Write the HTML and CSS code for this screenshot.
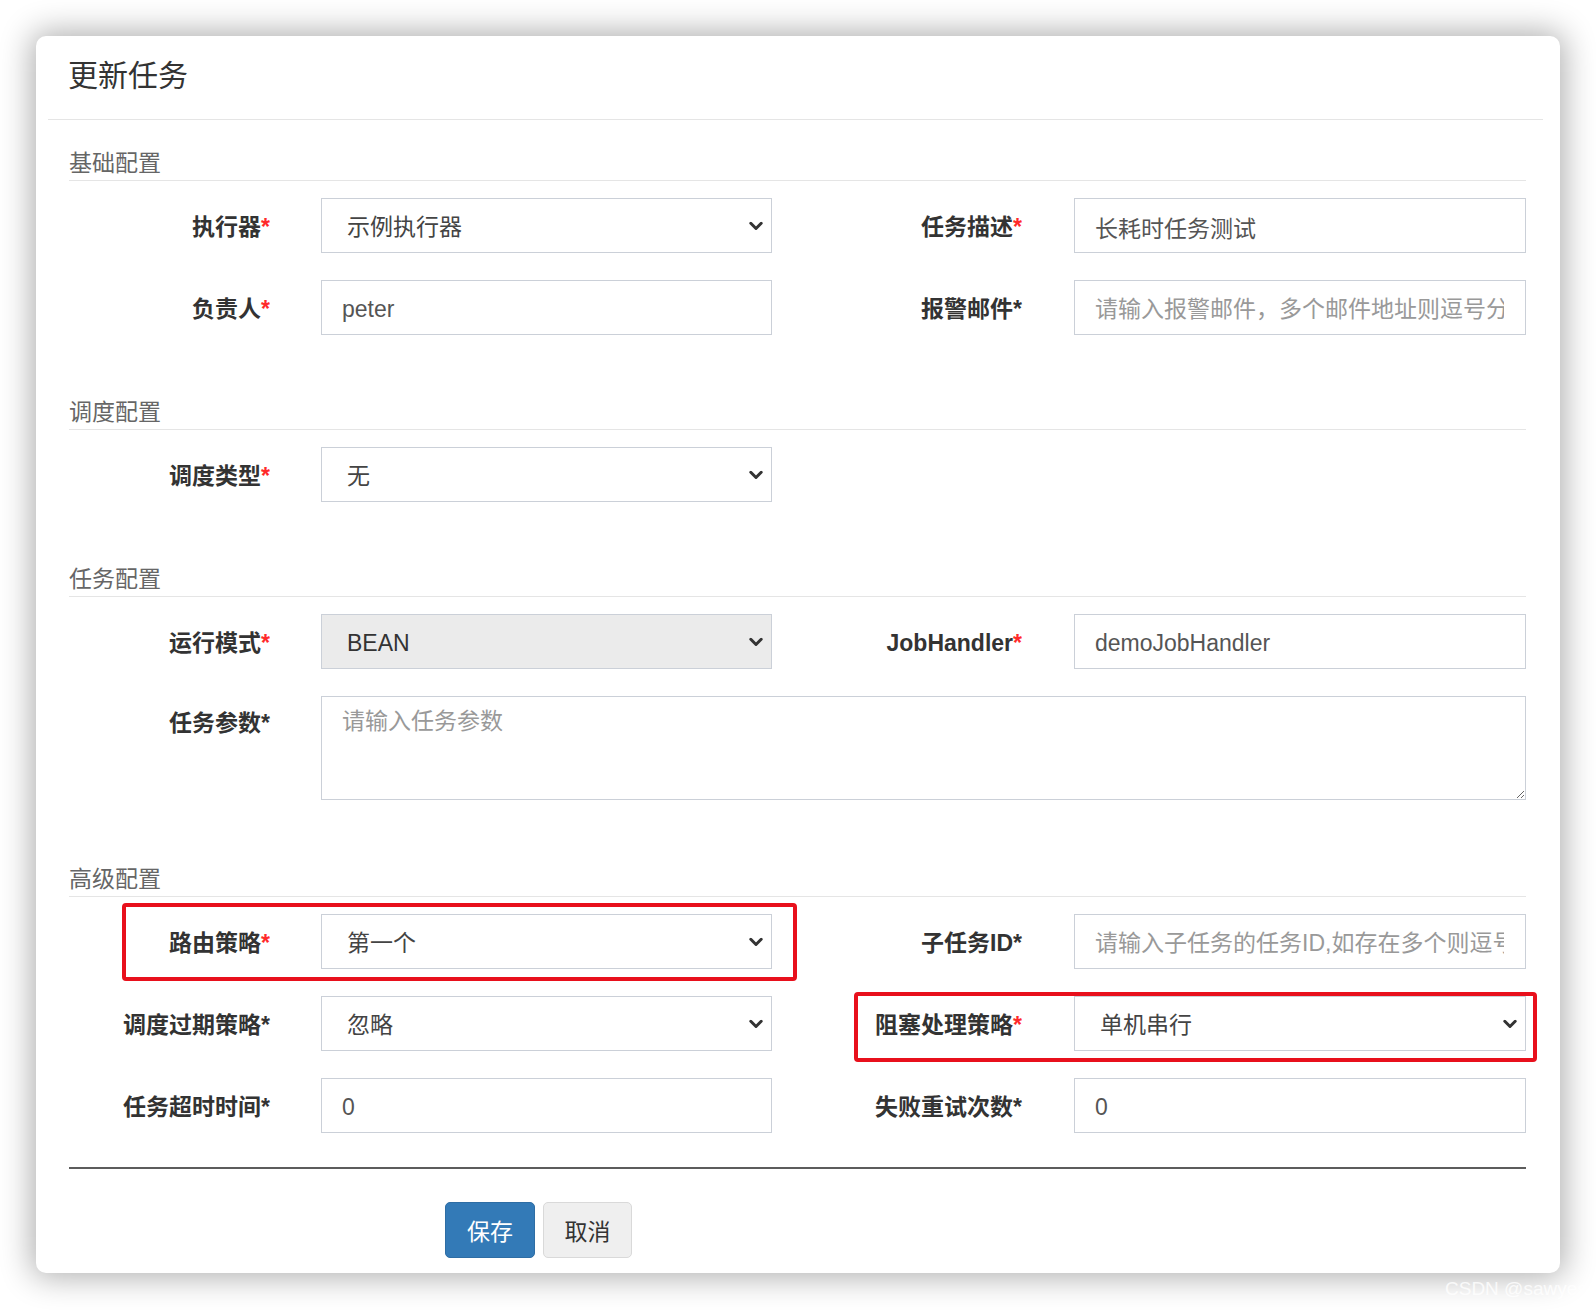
FILE: index.html
```html
<!DOCTYPE html>
<html lang="zh-CN">
<head>
<meta charset="utf-8">
<title>更新任务</title>
<link rel="stylesheet" href="styles.css">
</head>
<body>
<div class="page">
  <div class="modal">
    <div class="modal-header"><h4 class="modal-title">更新任务</h4></div>
    <div class="modal-body">

      <div class="section first">
        <div class="legend">基础配置</div>
        <div class="grid">
          <label class="lbl">执行器<span class="req">*</span></label>
          <div class="select-wrap">
            <select class="ctl sel"><option>示例执行器</option></select>
            <svg class="chev" viewBox="0 0 14 9" width="14" height="9"><polyline points="1.8,1.8 7,7 12.2,1.8" fill="none" stroke="#333" stroke-width="3" stroke-linecap="round" stroke-linejoin="round"/></svg>
          </div>
          <label class="lbl lbl-r">任务描述<span class="req">*</span></label>
          <input class="ctl" type="text" value="长耗时任务测试">

          <label class="lbl">负责人<span class="req">*</span></label>
          <input class="ctl" type="text" value="peter">
          <label class="lbl lbl-r">报警邮件*</label>
          <input class="ctl" type="text" placeholder="请输入报警邮件，多个邮件地址则逗号分隔">
        </div>
      </div>

      <div class="section">
        <div class="legend">调度配置</div>
        <div class="grid">
          <label class="lbl">调度类型<span class="req">*</span></label>
          <div class="select-wrap">
            <select class="ctl sel"><option>无</option></select>
            <svg class="chev" viewBox="0 0 14 9" width="14" height="9"><polyline points="1.8,1.8 7,7 12.2,1.8" fill="none" stroke="#333" stroke-width="3" stroke-linecap="round" stroke-linejoin="round"/></svg>
          </div>
        </div>
      </div>

      <div class="section">
        <div class="legend">任务配置</div>
        <div class="grid">
          <label class="lbl">运行模式<span class="req">*</span></label>
          <div class="select-wrap">
            <select class="ctl sel disabled"><option>BEAN</option></select>
            <svg class="chev" viewBox="0 0 14 9" width="14" height="9"><polyline points="1.8,1.8 7,7 12.2,1.8" fill="none" stroke="#333" stroke-width="3" stroke-linecap="round" stroke-linejoin="round"/></svg>
          </div>
          <label class="lbl lbl-r">JobHandler<span class="req">*</span></label>
          <input class="ctl" type="text" value="demoJobHandler">

          <label class="lbl lbl-top">任务参数*</label>
          <textarea class="ctl area" placeholder="请输入任务参数"></textarea>
        </div>
      </div>

      <div class="section last">
        <div class="legend">高级配置</div>
        <div class="grid">
          <label class="lbl">路由策略<span class="req">*</span></label>
          <div class="select-wrap">
            <select class="ctl sel"><option>第一个</option></select>
            <svg class="chev" viewBox="0 0 14 9" width="14" height="9"><polyline points="1.8,1.8 7,7 12.2,1.8" fill="none" stroke="#333" stroke-width="3" stroke-linecap="round" stroke-linejoin="round"/></svg>
          </div>
          <label class="lbl lbl-r">子任务ID*</label>
          <input class="ctl" type="text" placeholder="请输入子任务的任务ID,如存在多个则逗号分隔">

          <label class="lbl">调度过期策略*</label>
          <div class="select-wrap">
            <select class="ctl sel"><option>忽略</option></select>
            <svg class="chev" viewBox="0 0 14 9" width="14" height="9"><polyline points="1.8,1.8 7,7 12.2,1.8" fill="none" stroke="#333" stroke-width="3" stroke-linecap="round" stroke-linejoin="round"/></svg>
          </div>
          <label class="lbl lbl-r">阻塞处理策略<span class="req">*</span></label>
          <div class="select-wrap">
            <select class="ctl sel"><option>单机串行</option></select>
            <svg class="chev" viewBox="0 0 14 9" width="14" height="9"><polyline points="1.8,1.8 7,7 12.2,1.8" fill="none" stroke="#333" stroke-width="3" stroke-linecap="round" stroke-linejoin="round"/></svg>
          </div>

          <label class="lbl">任务超时时间*</label>
          <input class="ctl" type="text" value="0">
          <label class="lbl lbl-r">失败重试次数*</label>
          <input class="ctl" type="text" value="0">

          <div class="mark mark-1"></div>
          <div class="mark mark-2"></div>
        </div>
      </div>

      <div class="divider"></div>
      <div class="actions">
        <button class="btn btn-primary" type="button">保存</button>
        <button class="btn btn-default" type="button">取消</button>
      </div>
    </div>
  </div>
  <div class="watermark">CSDN @sawyes</div>
</div>
</body>
</html>
```

FILE: styles.css
```css
* { box-sizing: border-box; }

html, body {
  margin: 0;
  padding: 0;
  background: #ffffff;
}

body {
  font-family: "Liberation Sans", "Noto Sans CJK SC", sans-serif;
  color: #333;
  overflow: hidden;
}

.page {
  position: relative;
  width: 1596px;
  height: 1310px;
  padding: 36px 36px 0 36px;
}

.modal {
  width: 1524px;
  background: #fff;
  border-radius: 10px;
  box-shadow: 0 0 32px 4px rgba(0, 0, 0, 0.32);
}

.modal-header {
  margin: 0 17px 0 12px;
  padding: 20px 0 23px 20px;
  border-bottom: 1px solid #e5e5e5;
}

.modal-title {
  margin: 0;
  font-size: 30px;
  line-height: 40px;
  font-weight: normal;
  color: #333;
}

.modal-body {
  padding: 26px 34px 15px 33px;
}

.section { margin-top: 60px; }
.section.first { margin-top: 0; }
.section.last { margin-top: 62px; }

.legend {
  font-size: 23px;
  line-height: 32px;
  color: #666;
  padding-top: 1px;
  padding-bottom: 1px;
  border-bottom: 1px solid #e5e5e5;
  margin-bottom: 17px;
}

.grid {
  position: relative;
  display: grid;
  grid-template-columns: 252px 451px 302px 452px;
  grid-auto-rows: 55px;
  row-gap: 27px;
}

.lbl {
  font-size: 23px;
  font-weight: bold;
  color: #333;
  line-height: 55px;
  padding-top: 2px;
  text-align: right;
  padding-right: 51px;
  white-space: nowrap;
}

.lbl-r { padding-right: 52px; }

.lbl-top { line-height: 50px; }

.req { color: #ff2a2a; }

.ctl {
  display: block;
  width: 100%;
  height: 55px;
  margin: 0;
  border: 1px solid #cbd0d8;
  border-radius: 0;
  background: #fff;
  font-family: "Liberation Sans", "Noto Sans CJK SC", sans-serif;
  font-size: 23px;
  color: #555;
  padding: 3px 21px 0 20px;
  outline: none;
}

.ctl::placeholder { color: #999; }

.select-wrap { position: relative; }

.sel {
  -webkit-appearance: none;
  appearance: none;
  padding-left: 25px;
  color: #444;
}

.sel.disabled {
  background: #ebebeb;
  color: #333;
}

.chev {
  position: absolute;
  right: 9px;
  top: 50%;
  transform: translateY(-50%);
  pointer-events: none;
}

.area {
  grid-column: 2 / 5;
  height: 104px;
  padding: 8px 20px;
  line-height: 33px;
  resize: both;
  margin-bottom: 0;
}

.grid .area { align-self: start; }

.section:nth-child(3) .grid { grid-template-rows: 55px 104px; }

.mark {
  position: absolute;
  border: 4px solid #e8101c;
  border-radius: 4px;
  pointer-events: none;
}

.mark-1 {
  left: 53px;
  top: -11px;
  width: 675px;
  height: 78px;
}

.mark-2 {
  left: 785px;
  top: 78px;
  width: 683px;
  height: 70px;
}

.divider {
  margin-top: 34px;
  height: 2px;
  background: #5c5c5c;
}

.actions {
  margin-top: 33px;
  padding-left: 376px;
  display: flex;
  gap: 8px;
}

.btn {
  height: 56px;
  padding: 0;
  font-family: "Liberation Sans", "Noto Sans CJK SC", sans-serif;
  font-size: 23px;
  border-radius: 5px;
  cursor: pointer;
}

.btn-primary {
  width: 90px;
  background: #337ab7;
  border: 1px solid #2e6da4;
  color: #fff;
}

.btn-default {
  width: 89px;
  background: #efefef;
  border: 1px solid #d9d9d9;
  color: #333;
}

.watermark {
  position: absolute;
  left: 1445px;
  top: 1278px;
  font-size: 19px;
  color: rgba(255, 255, 255, 0.8);
  white-space: nowrap;
}
```
